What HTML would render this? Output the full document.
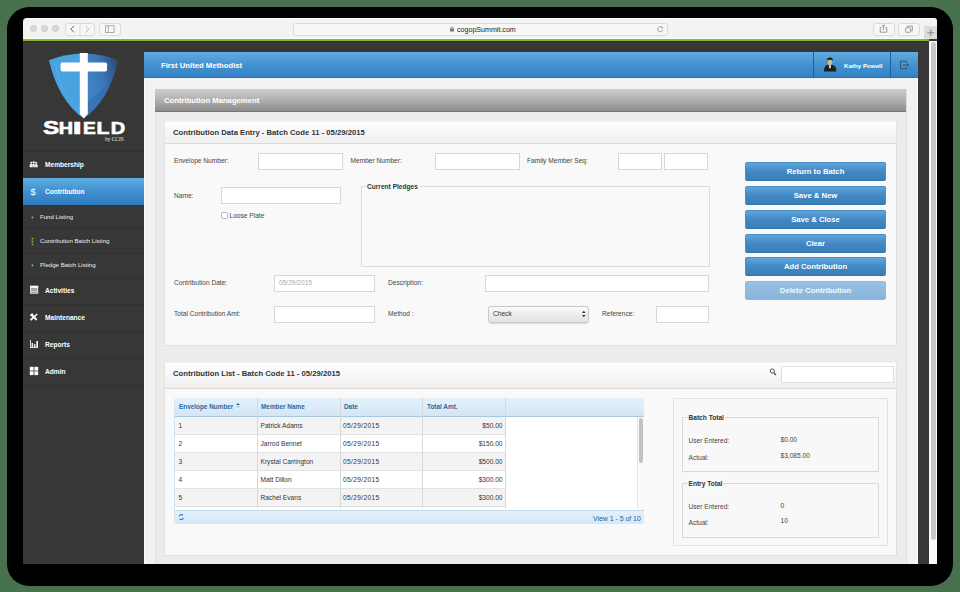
<!DOCTYPE html>
<html><head><meta charset="utf-8">
<style>
*{box-sizing:border-box;margin:0;padding:0}
html,body{width:960px;height:592px;overflow:hidden;background:#48724e;font-family:"Liberation Sans",sans-serif;position:relative}
div,span{position:absolute}
.t{white-space:nowrap;line-height:10px;height:10px}
#shadow{left:6.5px;top:7px;width:946.5px;height:579px;background:#000;border-radius:22px}
#win{left:23px;top:18px;width:914px;height:546px;background:#373737;border-radius:4px 4px 0 0;overflow:hidden}
#tb{left:23px;top:18px;width:914px;height:21px;background:#f3f3f3;border-top:1px solid #fbfbfb;border-radius:4px 3px 0 0}
#tbw{left:23px;top:38px;width:914px;height:1px;background:#fdfdfd}
#green{left:23px;top:39px;width:906px;height:2px;background:#85bb25}
#dline{left:23px;top:41px;width:906px;height:1px;background:#2d2d2d}
.dot{width:7px;height:7px;border-radius:50%;background:#d9d9d9;border:1px solid #cbcbcb;top:25px}
.tbtn{border:1px solid #dadada;border-radius:3px;background:#f7f7f7;height:13px;top:22.5px}
#addr{left:293px;width:375px}
#plus{left:924px;top:26px;width:13px;height:13px;background:#dcdcdc}
#scroll{left:928.5px;top:41px;width:8px;height:523px;background:#fbfbfb}
#thumb{left:931px;top:42px;width:5px;height:498px;background:#c8c8c8;border-radius:3px}
/* sidebar */
.sep{left:23px;width:121px;height:1px;background:#313131}
.mi{left:45px;color:#fff;font-weight:bold;font-size:6.6px}
.si{left:40px;color:#eee;font-size:6.1px}
#active{left:23px;top:178px;width:121px;height:27px;background:linear-gradient(#5fade2,#4090d0 50%,#2f7bbf)}
/* main */
#main{left:144px;top:52px;width:774px;height:512px;background:#f2f2f2;border-left:1px solid #fcfcfc;border-right:1px solid #fbfbfb}
#hdr{left:144px;top:52px;width:774px;height:25.5px;background:linear-gradient(#62acdf,#4592d1 50%,#3482c4);border-bottom:1px solid #2f74b2}
#sec{left:155px;top:89px;width:751.5px;height:475px;background:#ececec;border:1px solid #dfdfdf;border-bottom:none}
#sechdr{left:155px;top:89px;width:751px;height:23px;background:linear-gradient(#cdcdcd,#adadad 55%,#8d8d8d);border-bottom:1px solid #767676}
.wt{color:#fff;font-weight:bold;font-size:7.7px}
.panel{left:164px;width:733px;background:#f9f9f9;border:1px solid #dfdfdf}
.phdr{left:164px;width:733px;height:22.5px;background:linear-gradient(#fdfdfd,#f0f0f0);border:1px solid #e4e4e4;border-top-color:#f3f3f3;border-bottom-color:#dadada}
.pt{color:#333;font-weight:bold;font-size:7.7px}
.lbl{font-size:6.6px;color:#444}
.inp{background:#fff;border:1px solid #d8d8d8}
.btn{left:745px;width:141px;height:19px;border-radius:2px;background:linear-gradient(#5ea7da,#4288c4 50%,#3a7db9);border:1px solid #4a8cc4;border-bottom-color:#3473ad;color:#fff;font-weight:bold;font-size:7.7px;text-align:center;line-height:17px}
.vl{top:398px;width:1px;height:110px;background:#d8d8d8}
.gh{font-size:6.4px;font-weight:bold;color:#2a6a9c}
.gc{font-size:6.6px;color:#333}
</style></head>
<body>
<div id="shadow"></div>
<div id="win"></div>
<div id="tb"></div>
<div id="tbw"></div>
<div id="green"></div>
<div id="dline"></div>
<div class="dot" style="left:30px"></div>
<div class="dot" style="left:41px"></div>
<div class="dot" style="left:52px"></div>
<div class="tbtn" style="left:65px;width:30px"></div>
<div class="tbtn" style="left:99px;width:22px"></div>
<div class="tbtn" id="addr"></div>
<span class="t" style="left:457px;top:24.5px;font-size:7.1px;color:#222">cogopSummit.com</span>
<div class="tbtn" style="left:873px;width:22px"></div>
<div class="tbtn" style="left:898px;width:22px"></div>
<div id="plus"></div>
<div id="scroll"></div>
<div id="thumb"></div>


<!-- logo -->
<svg style="position:absolute;left:0;top:0" width="160" height="150" viewBox="0 0 160 150">
  <defs>
    <clipPath id="shc"><path d="M49,60.2 Q83,47 118.4,60.2 Q109,100 83.7,118.6 Q58,100 49,60.2 Z"/></clipPath>
    <linearGradient id="rg" gradientUnits="userSpaceOnUse" x1="88" y1="80" x2="119" y2="72">
      <stop offset="0" stop-color="#4183c4"/><stop offset="0.45" stop-color="#3b77b9"/><stop offset="0.8" stop-color="#2f62a2" stop-opacity="0.9"/><stop offset="1" stop-color="#2c5893" stop-opacity="0.55"/>
    </linearGradient>
  </defs>
  <g clip-path="url(#shc)">
    <rect x="40" y="45" width="44" height="80" fill="#4aa3e1"/>
    <rect x="83.7" y="45" width="40" height="80" fill="url(#rg)"/>
    <path d="M84,104 Q98,96 112,78 L118,125 L84,125 Z" fill="#2f66aa" opacity="0.5"/>
  </g>
  <path d="M56,64 Q60,95 80,110" fill="none" stroke="#bfe0f7" stroke-width="0.6" stroke-dasharray="0.8 1.6" opacity="0.8"/>
  <path d="M79.8,53 L87.8,53 L87.8,114 L83.8,118.6 L79.8,114 Z" fill="#fff"/>
  <rect x="60.6" y="62.6" width="46.4" height="8.8" rx="1.6" fill="#fff"/><rect x="62.5" y="63.8" width="42.6" height="6.4" fill="#fff"/>
</svg>
<svg style="position:absolute;left:0;top:0" width="140" height="145" viewBox="0 0 140 145"><g font-family="Liberation Sans" font-weight="bold" fill="#fff" stroke="#fff" stroke-width="0.6">
<text transform="translate(43.00,133.80) scale(1.339,1)" font-size="18.08">S</text>
<text transform="translate(58.65,134.00) scale(1.251,1)" font-size="15.84">H</text>
<text transform="translate(72.87,134.00) scale(2.013,1)" font-size="15.84">I</text>
<text transform="translate(83.08,134.00) scale(1.212,1)" font-size="15.84">E</text>
<text transform="translate(96.39,134.00) scale(1.329,1)" font-size="15.84">L</text>
<text transform="translate(110.84,134.00) scale(1.261,1)" font-size="15.84">D</text>
</g></svg>
<span class="t" style="left:105px;top:134.5px;font-size:5.4px;height:8px;line-height:8px;color:#eee;font-family:'Liberation Serif',serif">by CCIS</span>
<!-- sidebar -->
<div class="sep" style="top:151px"></div>
<div class="sep" style="top:178px"></div>
<div id="active"></div>
<div class="sep" style="top:228px"></div>
<div class="sep" style="top:252.5px"></div>
<div class="sep" style="top:278px"></div>
<div class="sep" style="top:304px"></div>
<div class="sep" style="top:331px"></div>
<div class="sep" style="top:358px"></div>
<div class="sep" style="top:385px"></div>
<span class="t mi" style="top:159.5px">Membership</span>
<span class="t mi" style="top:186.5px">Contribution</span>
<span class="t si" style="top:211.6px">Fund Listing</span>
<span class="t si" style="top:236px">Contribution Batch Listing</span>
<span class="t si" style="top:259.9px">Pledge Batch Listing</span>
<span class="t mi" style="top:285.5px">Activities</span>
<span class="t mi" style="top:312.5px">Maintenance</span>
<span class="t mi" style="top:339.5px">Reports</span>
<span class="t mi" style="top:366.5px">Admin</span>

<!-- main -->
<div id="main"></div>
<div id="hdr"></div>
<span class="t wt" style="left:161px;top:60.7px">First United Methodist</span>
<span class="t wt" style="left:844px;top:60.5px;font-size:6.2px">Kathy Powell</span>
<div id="sec"></div>
<div id="sechdr"></div>
<span class="t wt" style="left:164px;top:96px">Contribution Management</span>

<div class="panel" style="top:121px;height:224.5px"></div>
<div class="phdr" style="top:121px"></div>
<span class="t pt" style="left:173px;top:128px">Contribution Data Entry - Batch Code 11 - 05/29/2015</span>

<span class="t lbl" style="left:174px;top:155.8px">Envelope Number:</span>
<div class="inp" style="left:258px;top:153px;width:85px;height:17px"></div>
<span class="t lbl" style="left:350.5px;top:156px">Member Number:</span>
<div class="inp" style="left:435px;top:153px;width:85px;height:17px"></div>
<span class="t lbl" style="left:527px;top:156px">Family Member Seq:</span>
<div class="inp" style="left:618px;top:153px;width:44px;height:17px"></div>
<div class="inp" style="left:664px;top:153px;width:44px;height:17px"></div>

<span class="t lbl" style="left:174px;top:190.5px">Name:</span>
<div class="inp" style="left:221px;top:187px;width:120px;height:17px"></div>
<div class="inp" style="left:220.8px;top:212px;width:7px;height:7px;border-color:#b5b5b5;border-radius:1.5px"></div>
<span class="t lbl" style="left:229.5px;top:210.5px">Loose Plate</span>

<div style="left:361px;top:186px;width:349px;height:81px;border:1px solid #dcdcdc"></div>
<span class="t pt" style="left:366px;top:181.5px;font-size:6.6px;background:#f9f9f9;padding:0 1px">Current Pledges</span>

<span class="t lbl" style="left:174px;top:278px">Contribution Date:</span>
<div class="inp" style="left:274px;top:275px;width:101px;height:17px"></div>
<span class="t lbl" style="left:279px;top:278px;color:#aaa">05/29/2015</span>
<span class="t lbl" style="left:388px;top:278px">Description:</span>
<div class="inp" style="left:485px;top:275px;width:224px;height:17px"></div>

<span class="t lbl" style="left:174px;top:309px">Total Contribution Amt:</span>
<div class="inp" style="left:274px;top:306px;width:101px;height:17px"></div>
<span class="t lbl" style="left:388px;top:309px">Method :</span>
<div style="left:488px;top:305.5px;width:100.5px;height:17px;border:1px solid #c9c9c9;border-radius:3px;background:linear-gradient(#fafafa,#ececec 55%,#e2e2e2);box-shadow:0 0.5px 1px rgba(0,0,0,0.12)"></div>
<span class="t lbl" style="left:493px;top:309px;color:#333">Check</span>
<svg style="position:absolute;left:580px;top:309px" width="8" height="10" viewBox="0 0 8 10"><path d="M2,4 L3.8,1.8 L5.6,4 Z M2,6 L3.8,8.2 L5.6,6 Z" fill="#333"/></svg>
<span class="t lbl" style="left:602px;top:309px">Reference:</span>
<div class="inp" style="left:656px;top:306px;width:53px;height:17px"></div>

<div class="btn" style="top:162px">Return to Batch</div>
<div class="btn" style="top:186px">Save &amp; New</div>
<div class="btn" style="top:210px">Save &amp; Close</div>
<div class="btn" style="top:234px">Clear</div>
<div class="btn" style="top:257px">Add Contribution</div>
<div class="btn" style="top:281px;background:linear-gradient(#98c2e4,#88b5db);border-color:#8fbadd;color:#f6fafd">Delete Contribution</div>

<!-- list panel -->
<div class="panel" style="top:362px;height:193.5px"></div>
<div class="phdr" style="top:362px;height:26.5px"></div>
<span class="t pt" style="left:173px;top:369px">Contribution List - Batch Code 11 - 05/29/2015</span>
<div class="inp" style="left:781px;top:365.5px;width:112.5px;height:17px;border-color:#e0e0e0"></div>


<!-- grid -->
<div style="left:174px;top:397.5px;width:470px;height:126px;background:#fff;border:1px solid #d3e3f0;border-radius:3px"></div>
<div style="left:175px;top:398px;width:469px;height:18.5px;background:linear-gradient(#e4f1fb,#d3e6f6);border-bottom:1px solid #a6c9e2;border-radius:3px 3px 0 0"></div>
<span class="t gh" style="left:179px;top:402px">Envelope Number</span>
<span class="t gh" style="left:261px;top:402px">Member Name</span>
<span class="t gh" style="left:344px;top:402px">Date</span>
<span class="t gh" style="left:427px;top:402px">Total Amt.</span>
<div style="left:236px;top:403px;width:0;height:0;border-left:2px solid transparent;border-right:2px solid transparent;border-bottom:2.5px solid #2e6e9e"></div>
<div style="left:236px;top:406px;width:0;height:0;border-left:2px solid transparent;border-right:2px solid transparent;border-top:2.5px solid #a8c4dc"></div>
<div style="left:175px;top:416.5px;width:330.5px;height:18.2px;background:#f3f3f3;border-bottom:1px solid #e2e2e2"></div>
<span class="t gc" style="left:178.5px;top:420.6px">1</span>
<span class="t gc" style="left:260.5px;top:420.6px">Patrick Adams</span>
<span class="t gc" style="letter-spacing:0.35px;left:343px;top:420.6px">05/29/2015</span>
<span class="t gc" style="left:422.5px;width:80px;text-align:right;top:420.6px">$50.00</span>
<div style="left:175px;top:434.7px;width:330.5px;height:18.2px;background:#ffffff;border-bottom:1px solid #e2e2e2"></div>
<span class="t gc" style="left:178.5px;top:438.8px">2</span>
<span class="t gc" style="left:260.5px;top:438.8px">Jarrod Bennet</span>
<span class="t gc" style="letter-spacing:0.35px;left:343px;top:438.8px">05/29/2015</span>
<span class="t gc" style="left:422.5px;width:80px;text-align:right;top:438.8px">$150.00</span>
<div style="left:175px;top:452.9px;width:330.5px;height:18.2px;background:#f3f3f3;border-bottom:1px solid #e2e2e2"></div>
<span class="t gc" style="left:178.5px;top:457.0px">3</span>
<span class="t gc" style="left:260.5px;top:457.0px">Krystal Carrington</span>
<span class="t gc" style="letter-spacing:0.35px;left:343px;top:457.0px">05/29/2015</span>
<span class="t gc" style="left:422.5px;width:80px;text-align:right;top:457.0px">$500.00</span>
<div style="left:175px;top:471.1px;width:330.5px;height:18.2px;background:#ffffff;border-bottom:1px solid #e2e2e2"></div>
<span class="t gc" style="left:178.5px;top:475.2px">4</span>
<span class="t gc" style="left:260.5px;top:475.2px">Matt Dillon</span>
<span class="t gc" style="letter-spacing:0.35px;left:343px;top:475.2px">05/29/2015</span>
<span class="t gc" style="left:422.5px;width:80px;text-align:right;top:475.2px">$300.00</span>
<div style="left:175px;top:489.3px;width:330.5px;height:18.2px;background:#f3f3f3;border-bottom:1px solid #e2e2e2"></div>
<span class="t gc" style="left:178.5px;top:493.4px">5</span>
<span class="t gc" style="left:260.5px;top:493.4px">Rachel Evans</span>
<span class="t gc" style="letter-spacing:0.35px;left:343px;top:493.4px">05/29/2015</span>
<span class="t gc" style="left:422.5px;width:80px;text-align:right;top:493.4px">$300.00</span>

<div class="vl" style="left:257px"></div>
<div class="vl" style="left:340px"></div>
<div class="vl" style="left:422px"></div>
<div class="vl" style="left:505px"></div>
<div style="left:636.5px;top:416.5px;width:7px;height:92px;background:#fafafa;border-left:1px solid #e4e4e4"></div>
<div style="left:638.5px;top:418px;width:4px;height:45px;background:#c2c2c2;border-radius:2px"></div>
<div style="left:175px;top:509.5px;width:469px;height:14px;background:linear-gradient(#e2f0fb,#d6e8f7);border-top:1px solid #c5dbec;border-radius:0 0 3px 3px"></div>
<svg style="position:absolute;left:176px;top:512px" width="10" height="10" viewBox="176 512 10 10"><path d="M179.2,516.3 A2.3,2.3 0 0 1 182.6,515" fill="none" stroke="#2f7fc1" stroke-width="1.1"/><path d="M181.5,514 L183.2,514.3 L182.6,516 Z" fill="#2f7fc1"/><path d="M183.4,517.9 A2.3,2.3 0 0 1 180,519.2" fill="none" stroke="#2f7fc1" stroke-width="1.1"/><path d="M181.1,520.2 L179.4,519.9 L180,518.2 Z" fill="#2f7fc1"/></svg>
<span class="t" style="left:593px;top:513.8px;font-size:6.9px;color:#1f5f96">View 1 - 5 of 10</span>

<!-- totals -->
<svg style="position:absolute;left:768px;top:367px" width="10" height="11" viewBox="0 0 10 11"><circle cx="4.3" cy="4" r="2.1" fill="none" stroke="#444" stroke-width="0.9"/><path d="M5.8,5.6 L8,8.2" stroke="#444" stroke-width="1.3"/></svg>
<div style="left:673px;top:397.5px;width:214.5px;height:148.5px;background:#f8f8f8;border:1px solid #e2e2e2"></div>
<div style="left:682px;top:417px;width:197px;height:54.5px;border:1px solid #d9d9d9"></div>
<span class="t pt" style="left:687.5px;top:412.5px;font-size:6.6px;background:#f9f9f9;padding:0 1px">Batch Total</span>
<span class="t lbl" style="left:688.5px;top:436px">User Entered:</span>
<span class="t lbl" style="left:780.5px;top:434.5px">$0.00</span>
<span class="t lbl" style="left:688.5px;top:452.5px">Actual:</span>
<span class="t lbl" style="left:780.5px;top:451px">$3,085.00</span>
<div style="left:682px;top:483px;width:197px;height:54.5px;border:1px solid #d9d9d9"></div>
<span class="t pt" style="left:687.5px;top:478.5px;font-size:6.6px;background:#f9f9f9;padding:0 1px">Entry Total</span>
<span class="t lbl" style="left:688.5px;top:502px">User Entered:</span>
<span class="t lbl" style="left:780.5px;top:500.5px">0</span>
<span class="t lbl" style="left:688.5px;top:518px">Actual:</span>
<span class="t lbl" style="left:780.5px;top:516px">10</span>

<!-- sidebar icons -->
<svg style="position:absolute;left:0;top:0" width="60" height="400" viewBox="0 0 60 400">
  <g fill="#fff">
    <!-- membership people -->
    <circle cx="31.2" cy="162.8" r="1"/><path d="M29.7,167.2 V165 Q29.7,163.9 31.2,163.9 Q32.7,163.9 32.7,165 V167.2 Z"/>
    <circle cx="36.1" cy="162.8" r="1"/><path d="M34.6,167.2 V165 Q34.6,163.9 36.1,163.9 Q37.6,163.9 37.6,165 V167.2 Z"/>
    <circle cx="33.65" cy="162.4" r="1.1"/><path d="M32.2,167.2 V164.8 Q32.2,163.6 33.65,163.6 Q35.1,163.6 35.1,164.8 V167.2 Z" stroke="#373737" stroke-width="0.4"/>
    <!-- activities calendar -->
    <rect x="30" y="285.8" width="8.2" height="8" fill="#d8d8d8"/>
    <rect x="30" y="285.8" width="8.2" height="1.8" fill="#fff"/>
    <rect x="31.2" y="288.6" width="5.8" height="0.8" fill="#555"/>
    <rect x="31.2" y="290.4" width="5.8" height="0.6" fill="#777"/>
    <rect x="31.2" y="292" width="5.8" height="0.6" fill="#777"/>
    <!-- maintenance tools -->
    <path d="M30.2,314.6 L32,313.4 L37.3,319.3 L36,320.7 Z"/>
    <path d="M36.8,313.6 L37.6,314.4 L31.3,320.8 L29.8,319.6 Z"/>
    <path d="M30,315.5 L32.5,313.2 L33.4,314.6 L31.2,316.6 Z"/>
    <!-- reports bars -->
    <rect x="30" y="340" width="1" height="8" fill="#ddd"/>
    <rect x="30" y="347" width="8" height="1" fill="#ddd"/>
    <rect x="31.6" y="343" width="1.5" height="4.2" fill="#e8e8e8"/>
    <rect x="34" y="344.2" width="1.5" height="3" fill="#f4f4f4"/>
    <rect x="36.4" y="341" width="1.6" height="6.2"/>
    <!-- admin squares -->
    <rect x="29.8" y="366.8" width="3.8" height="3.8"/>
    <rect x="34.4" y="366.8" width="3.8" height="3.8"/>
    <rect x="29.8" y="371.3" width="3.8" height="3.8"/>
    <rect x="34.4" y="371.3" width="3.8" height="3.8"/>
  </g>
  <!-- sub item markers -->
  <path d="M31,217.5 H33.8 M32.4,216.1 V218.9" stroke="#9a9a9a" stroke-width="0.7"/>
  <path d="M31,265.4 H33.8 M32.4,264 V266.8" stroke="#9a9a9a" stroke-width="0.7"/>
  <g fill="#8fc02c"><rect x="31.7" y="237.8" width="1.6" height="1.6"/><rect x="31.7" y="240.7" width="1.6" height="1.6"/><rect x="31.7" y="243.6" width="1.6" height="1.6"/></g>
</svg>
<span class="t" style="left:30.6px;top:185.5px;height:12px;line-height:12px;font-size:9.5px;color:#fff">$</span>

<!-- header icons -->
<div style="left:813px;top:52px;width:1px;height:25.5px;background:#21609c"></div>
<div style="left:890px;top:52px;width:1px;height:25.5px;background:#21609c"></div>
<svg style="position:absolute;left:800px;top:50px" width="120" height="30" viewBox="800 50 120 30">
  <path d="M823.9,71.6 Q823.9,65.5 828,64.8 L832,64.8 Q836.4,65.5 836.4,71.6 Z" fill="#1e1e1e"/>
  <ellipse cx="829.9" cy="62.4" rx="2.2" ry="2.9" fill="#cdbb90"/>
  <path d="M826.8,60.8 Q827,57.6 829.9,57.6 Q832.9,57.6 833,60.8 L832,59.8 L827.8,59.8 Z" fill="#1a1a1a"/>
  <rect x="829" y="65.2" width="1.8" height="3" fill="#e8e0c8"/>
  <path d="M906.5,62.5 V61.2 H900.6 V68.8 H906.5 V67.4" fill="none" stroke="#3d4a55" stroke-width="0.9"/>
  <path d="M903.2,65 H908.4 M906.8,63.4 L908.6,65 L906.8,66.6" fill="none" stroke="#3d4a55" stroke-width="0.9"/>
</svg>

<!-- toolbar icons -->
<svg style="position:absolute;left:0;top:0" width="960" height="45" viewBox="0 0 960 45">
  <path d="M74,26 L70.8,29.2 L74,32.4" fill="none" stroke="#555" stroke-width="0.9"/>
  <path d="M85.6,26 L88.8,29.2 L85.6,32.4" fill="none" stroke="#aaa" stroke-width="0.9"/>
  <line x1="80" y1="22.5" x2="80" y2="35.5" stroke="#dadada" stroke-width="1"/>
  <rect x="105.5" y="25.8" width="8.6" height="6.6" fill="none" stroke="#9a9a9a" stroke-width="0.8"/>
  <line x1="108.3" y1="25.8" x2="108.3" y2="32.4" stroke="#9a9a9a" stroke-width="0.8"/>
  <rect x="450" y="28.5" width="4" height="3" fill="#777"/>
  <path d="M450.8,28.6 V27.6 Q452,25.8 453.2,27.6 V28.6" fill="none" stroke="#777" stroke-width="0.7"/>
  <path d="M662.4,27.6 A2.6,2.6 0 1 0 662.8,30" fill="none" stroke="#888" stroke-width="0.8"/>
  <path d="M661.2,26.6 L662.8,27.6 L661.6,29" fill="none" stroke="#888" stroke-width="0.7"/>
  <path d="M881.6,27.6 H880.2 V32.2 H886.8 V27.6 H885.4" fill="none" stroke="#888" stroke-width="0.8"/>
  <path d="M883.5,30 V25 M882,26.4 L883.5,25 L885,26.4" fill="none" stroke="#888" stroke-width="0.8"/>
  <rect x="905.6" y="27.8" width="5" height="4.5" rx="0.8" fill="none" stroke="#888" stroke-width="0.8"/>
  <path d="M907.4,27.8 V26.2 H912.4 V30.6 H910.6" fill="none" stroke="#888" stroke-width="0.8"/>
  <path d="M927.2,32.8 H934.4 M930.8,29.2 V36.4" stroke="#777" stroke-width="0.8"/>
</svg>
</body></html>
